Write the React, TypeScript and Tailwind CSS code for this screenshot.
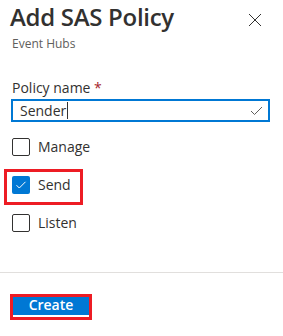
import React from "react";

function Box({ checked, label }: { checked?: boolean; label: string }) {
  return (
    <div className="flex items-center h-[18px]">
      {checked ? (
        <div className="w-[18px] h-[18px] rounded-[2px] bg-[#0078d4] flex items-center justify-center">
          <svg width="12" height="10" viewBox="0 0 12 10" fill="none">
            <path d="M1.5 5.2 L4.3 8 L10.5 1.8" stroke="#ffffff" strokeWidth="1" />
          </svg>
        </div>
      ) : (
        <div className="w-[18px] h-[18px] rounded-[2px] border border-[#323130]" />
      )}
      <span className="ml-[8px] text-[14px] leading-[18px] text-[#323130]">{label}</span>
    </div>
  );
}

export default function App() {
  return (
    <div
      className="relative w-[283px] h-[336px] bg-white flex flex-col"
      style={{ fontFamily: '"Open Sans", "Noto Sans", sans-serif' }}
    >
      <div className="flex items-start justify-between pl-[10px] pr-[21px] pt-[1px]">
        <div className="text-[24px] leading-[32px] font-semibold text-[#323130] tracking-[-0.3px]">
          Add SAS Policy
        </div>
        <svg width="14" height="14" viewBox="0 0 14 14" className="mt-[12px]">
          <path d="M1 1 L13 13 M13 1 L1 13" stroke="#323130" strokeWidth="1" />
        </svg>
      </div>
      <div className="pl-[12px] mt-[3px] text-[12px] leading-[16px] text-[#605e5c]">Event Hubs</div>

      <div className="pl-[12px] mt-[26px] text-[14px] leading-[20px] text-[#323130]">
        Policy name <span className="text-[#a4262c]">*</span>
      </div>
      <div className="mx-[11px] w-[259px] h-[23px] mt-[1px] border-2 border-[#0078d4] flex items-center px-[7px]">
        <span className="text-[14px] leading-[18px] text-[#323130]">Sender</span>
        <span className="w-px h-[17px] bg-[#323130] ml-[1px]" />
        <div className="flex-1" />
        <svg width="13" height="10" viewBox="0 0 13 10" fill="none" className="mr-[-2px]">
          <path d="M1 5 L4.5 8.5 L12 1" stroke="#605e5c" strokeWidth="1" />
        </svg>
      </div>

      <div className="pl-[12px] mt-[16px] flex flex-col gap-[20px]">
        <Box label="Manage" />
        <Box checked label="Send" />
        <Box label="Listen" />
      </div>

      <div className="mt-[40px] h-px bg-[#e1dfdd]" />

      <div className="pl-[13px] mt-[22px]">
        <button className="w-[76px] h-[20px] bg-[#0078d4] text-white text-[14px] leading-[20px] font-semibold flex items-center justify-center">
          Create
        </button>
      </div>

      <div className="absolute left-[4px] top-[169px] w-[79px] h-[36px] border-[3px] border-[#ed1c24] pointer-events-none" />
      <div className="absolute left-[10px] top-[294px] w-[82px] h-[26px] border-[3px] border-[#ed1c24] pointer-events-none" />
    </div>
  );
}
